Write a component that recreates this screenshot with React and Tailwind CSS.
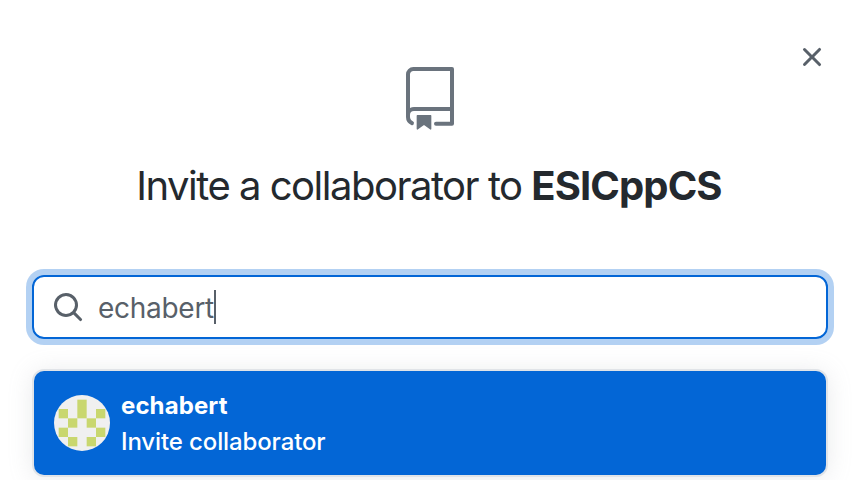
const AVATAR_CELLS = [[2, 0], [0, 1], [2, 1], [4, 1], [1, 2], [3, 2], [0, 3], [4, 3], [1, 4], [3, 4]];

function RepoIcon() {
  return (
    <svg className="h-16 w-16 text-[#6a737d]" viewBox="0 0 24 24" fill="currentColor" aria-hidden="true">
      <path fillRule="evenodd" d="M3 2.75A2.75 2.75 0 015.75 0h14.5a.75.75 0 01.75.75v20.5a.75.75 0 01-.75.75h-6a.75.75 0 010-1.5h5.25v-4H6A1.5 1.5 0 004.5 18v.75c0 .716.43 1.334 1.05 1.605a.75.75 0 01-.6 1.374A3.25 3.25 0 013 18.75v-16zM19.5 1.5V15H6c-.546 0-1.059.146-1.5.401V2.75c0-.69.56-1.25 1.25-1.25H19.5z" />
      <path d="M7 18.25a.25.25 0 01.25-.25h5a.25.25 0 01.25.25v5.01a.25.25 0 01-.397.201l-2.206-1.604a.25.25 0 00-.294 0L7.397 23.46a.25.25 0 01-.397-.2v-5.01z" />
    </svg>
  );
}

function CloseIcon() {
  return (
    <svg className="h-8 w-8" viewBox="0 0 16 16" fill="currentColor" aria-hidden="true">
      <path fillRule="evenodd" d="M3.72 3.72a.75.75 0 011.06 0L8 6.94l3.22-3.22a.75.75 0 111.06 1.06L9.06 8l3.22 3.22a.75.75 0 11-1.06 1.06L8 9.06l-3.22 3.22a.75.75 0 01-1.06-1.06L6.94 8 3.72 4.78a.75.75 0 010-1.06z" />
    </svg>
  );
}

function SearchIcon() {
  return (
    <svg className="h-8 w-8 shrink-0" viewBox="0 0 16 16" fill="currentColor" aria-hidden="true">
      <path fillRule="evenodd" d="M11.5 7a4.499 4.499 0 11-8.998 0A4.499 4.499 0 0111.5 7zm-.82 4.74a6 6 0 111.06-1.06l3.04 3.04a.75.75 0 11-1.06 1.06l-3.04-3.04z" />
    </svg>
  );
}

function Avatar() {
  return (
    <svg className="h-14 w-14 shrink-0 rounded-full bg-[#f0f0f0]" viewBox="0 0 12 12" aria-hidden="true">
      {AVATAR_CELLS.map(([x, y]) => (
        <rect key={`${x}-${y}`} x={1 + x * 2} y={1 + y * 2} width="2" height="2" fill="#c9d76f" />
      ))}
    </svg>
  );
}

export default function App() {
  return (
    <div className="flex h-[480px] w-[860px] flex-col overflow-hidden bg-white px-8 font-['Inter',sans-serif] text-[#24292e]">
      <div className="flex h-[73px] shrink-0 items-end justify-end">
        <button type="button" aria-label="Close" className="text-[#586069]">
          <CloseIcon />
        </button>
      </div>
      <div className="-mt-1.5 flex shrink-0 justify-center">
        <RepoIcon />
      </div>
      <h1 className="mt-[25px] flex h-[60px] shrink-0 items-center justify-center pr-0.5 text-[40px] leading-[60px] whitespace-pre">
        <span className="font-[430] tracking-[-1.5px]">Invite a collaborator to </span>
        <strong className="font-bold tracking-[-0.9px]">ESICppCS</strong>
      </h1>
      <div className="mt-[59px] flex h-16 shrink-0 items-center rounded-xl border-2 border-[#0366d6] pl-[18px] text-[#586069] shadow-[0_0_0_6px_rgba(3,102,214,0.3)]">
        <SearchIcon />
        <span className="ml-3.5 pt-0.5 text-[28px] leading-10 font-[430] tracking-[-0.28px]">echabert</span>
        <span className="h-[34px] w-0.5 bg-[#586069]" />
      </div>
      <div className="mt-[30px] h-[108px] shrink-0 rounded-xl border-2 border-[#e1e4e8] bg-[#e1e4e8] shadow-[0_2px_24px_rgba(149,157,165,0.2)]">
        <div className="flex h-[104px] items-center rounded-[10px] bg-[#0366d6] pl-5 text-2xl leading-9 text-white">
          <Avatar />
          <div className="ml-[11px] flex flex-col pt-0.5">
            <span className="font-bold tracking-[0.1px]">echabert</span>
            <span className="font-[450] tracking-[-0.12px]">Invite collaborator</span>
          </div>
        </div>
      </div>
    </div>
  );
}
